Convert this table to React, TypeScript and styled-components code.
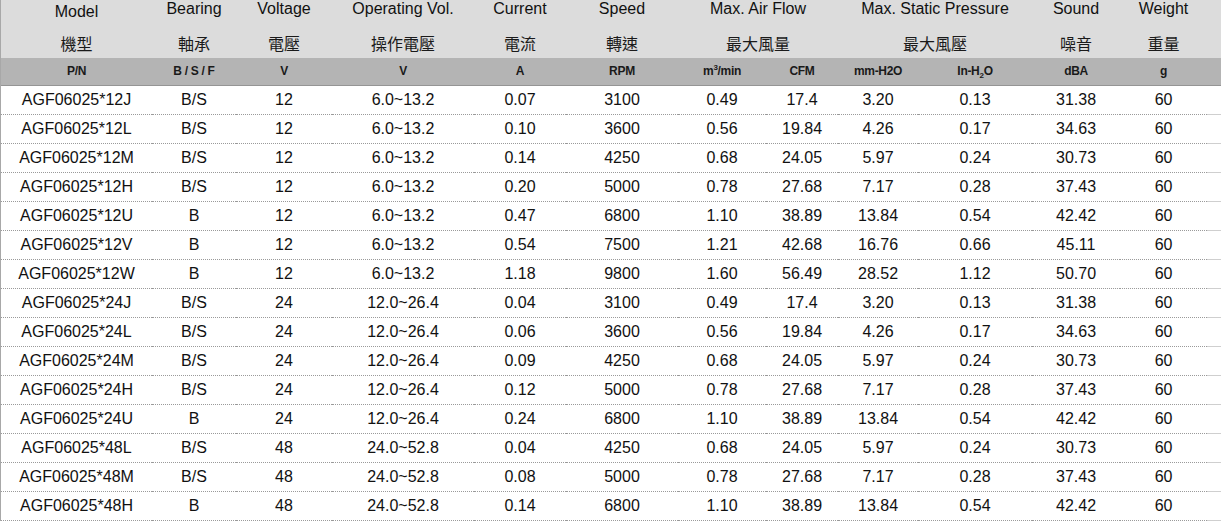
import React from "react";
import styled, { createGlobalStyle } from "styled-components";

const GlobalStyle = createGlobalStyle`
    html, body {
        margin: 0;
        padding: 0;
        background: #ffffff;
    }
`;

interface Spec {
    model: string;
    bearing: string;
    voltage: string;
    range: string;
    current: string;
    speed: string;
    m3: string;
    cfm: string;
    mm: string;
    inch: string;
    sound: string;
    weight: string;
}

const row = (s: string): Spec => {
    const [model, bearing, voltage, range, current, speed, m3, cfm, mm, inch, sound, weight] =
        s.split(" ");
    return { model, bearing, voltage, range, current, speed, m3, cfm, mm, inch, sound, weight };
};

const specs: Spec[] = [
    "AGF06025*12J B/S 12 6.0~13.2 0.07 3100 0.49 17.4 3.20 0.13 31.38 60",
    "AGF06025*12L B/S 12 6.0~13.2 0.10 3600 0.56 19.84 4.26 0.17 34.63 60",
    "AGF06025*12M B/S 12 6.0~13.2 0.14 4250 0.68 24.05 5.97 0.24 30.73 60",
    "AGF06025*12H B/S 12 6.0~13.2 0.20 5000 0.78 27.68 7.17 0.28 37.43 60",
    "AGF06025*12U B 12 6.0~13.2 0.47 6800 1.10 38.89 13.84 0.54 42.42 60",
    "AGF06025*12V B 12 6.0~13.2 0.54 7500 1.21 42.68 16.76 0.66 45.11 60",
    "AGF06025*12W B 12 6.0~13.2 1.18 9800 1.60 56.49 28.52 1.12 50.70 60",
    "AGF06025*24J B/S 24 12.0~26.4 0.04 3100 0.49 17.4 3.20 0.13 31.38 60",
    "AGF06025*24L B/S 24 12.0~26.4 0.06 3600 0.56 19.84 4.26 0.17 34.63 60",
    "AGF06025*24M B/S 24 12.0~26.4 0.09 4250 0.68 24.05 5.97 0.24 30.73 60",
    "AGF06025*24H B/S 24 12.0~26.4 0.12 5000 0.78 27.68 7.17 0.28 37.43 60",
    "AGF06025*24U B 24 12.0~26.4 0.24 6800 1.10 38.89 13.84 0.54 42.42 60",
    "AGF06025*48L B/S 48 24.0~52.8 0.04 4250 0.68 24.05 5.97 0.24 30.73 60",
    "AGF06025*48M B/S 48 24.0~52.8 0.08 5000 0.78 27.68 7.17 0.28 37.43 60",
    "AGF06025*48H B 48 24.0~52.8 0.14 6800 1.10 38.89 13.84 0.54 42.42 60",
].map(row);

const widths = [151, 84, 96, 142, 92, 112, 88, 72, 80, 114, 88, 87, 14];

const Sheet = styled.div`
    border-left: 1px solid #a8a8a8;
    width: 1220px;
`;

const Table = styled.table`
    width: 1220px;
    table-layout: fixed;
    border-collapse: collapse;
    font-family: "Liberation Sans", Arial, sans-serif;
    color: #111111;

    th,
    td {
        box-sizing: border-box;
    }
`;

const TitleCell = styled.th<{ $drop?: number }>`
    background: #dcdcdc;
    height: 28px;
    padding: ${(p) => p.$drop ?? 0}px 0 ${(p) => 10 - (p.$drop ?? 0)}px;
    font-size: 16px;
    font-weight: normal;
    line-height: 18px;
    text-align: center;
    vertical-align: top;
    white-space: nowrap;
`;

const ChineseCell = styled.th`
    background: #dcdcdc;
    height: 30px;
    padding: 0;
    font-family: "Noto Sans CJK TC", "Noto Sans CJK SC", sans-serif;
    font-size: 16px;
    font-weight: normal;
    line-height: 30px;
    text-align: center;
    color: #1a1a1a;
`;

const UnitCell = styled.th`
    background: #b4b4b4;
    height: 27px;
    padding: 0;
    border-bottom: 1px solid #959595;
    font-size: 12px;
    font-weight: bold;
    line-height: 26px;
    text-align: center;
    color: #1a1a1a;
    letter-spacing: -0.3px;

    sup,
    sub {
        font-size: 8px;
        line-height: 0;
    }
`;

const DataCell = styled.td`
    height: 29px;
    padding: 0;
    border-bottom: 1px dotted #9a9a9a;
    font-size: 16px;
    line-height: 28px;
    text-align: center;
    white-space: nowrap;
`;

const EdgeCell = styled.td`
    padding: 0;
    border-bottom: 1px solid #cfcfcf;
`;

const Filler = styled.th<{ $tone: string }>`
    background: ${(p) => p.$tone};
    padding: 0;
`;

export default function App() {
    return (
        <>
            <GlobalStyle />
            <Sheet>
                <Table>
                    <colgroup>
                        {widths.map((w, i) => (
                            <col key={i} style={{ width: w }} />
                        ))}
                    </colgroup>
                    <thead>
                        <tr>
                            <TitleCell $drop={3}>Model</TitleCell>
                            <TitleCell>Bearing</TitleCell>
                            <TitleCell>Voltage</TitleCell>
                            <TitleCell>Operating Vol.</TitleCell>
                            <TitleCell>Current</TitleCell>
                            <TitleCell>Speed</TitleCell>
                            <TitleCell colSpan={2}>Max. Air Flow</TitleCell>
                            <TitleCell colSpan={2}>Max. Static Pressure</TitleCell>
                            <TitleCell>Sound</TitleCell>
                            <TitleCell>Weight</TitleCell>
                            <Filler $tone="#dcdcdc" />
                        </tr>
                        <tr>
                            <ChineseCell>機型</ChineseCell>
                            <ChineseCell>軸承</ChineseCell>
                            <ChineseCell>電壓</ChineseCell>
                            <ChineseCell>操作電壓</ChineseCell>
                            <ChineseCell>電流</ChineseCell>
                            <ChineseCell>轉速</ChineseCell>
                            <ChineseCell colSpan={2}>最大風量</ChineseCell>
                            <ChineseCell colSpan={2}>最大風壓</ChineseCell>
                            <ChineseCell>噪音</ChineseCell>
                            <ChineseCell>重量</ChineseCell>
                            <Filler $tone="#dcdcdc" />
                        </tr>
                        <tr>
                            <UnitCell>P/N</UnitCell>
                            <UnitCell>B / S / F</UnitCell>
                            <UnitCell>V</UnitCell>
                            <UnitCell>V</UnitCell>
                            <UnitCell>A</UnitCell>
                            <UnitCell>RPM</UnitCell>
                            <UnitCell>
                                m<sup>3</sup>/min
                            </UnitCell>
                            <UnitCell>CFM</UnitCell>
                            <UnitCell>mm-H2O</UnitCell>
                            <UnitCell>
                                In-H<sub>2</sub>O
                            </UnitCell>
                            <UnitCell>dBA</UnitCell>
                            <UnitCell>g</UnitCell>
                            <UnitCell />
                        </tr>
                    </thead>
                    <tbody>
                        {specs.map((s) => (
                            <tr key={s.model}>
                                <DataCell>{s.model}</DataCell>
                                <DataCell>{s.bearing}</DataCell>
                                <DataCell>{s.voltage}</DataCell>
                                <DataCell>{s.range}</DataCell>
                                <DataCell>{s.current}</DataCell>
                                <DataCell>{s.speed}</DataCell>
                                <DataCell>{s.m3}</DataCell>
                                <DataCell>{s.cfm}</DataCell>
                                <DataCell>{s.mm}</DataCell>
                                <DataCell>{s.inch}</DataCell>
                                <DataCell>{s.sound}</DataCell>
                                <DataCell>{s.weight}</DataCell>
                                <EdgeCell />
                            </tr>
                        ))}
                    </tbody>
                </Table>
            </Sheet>
        </>
    );
}
